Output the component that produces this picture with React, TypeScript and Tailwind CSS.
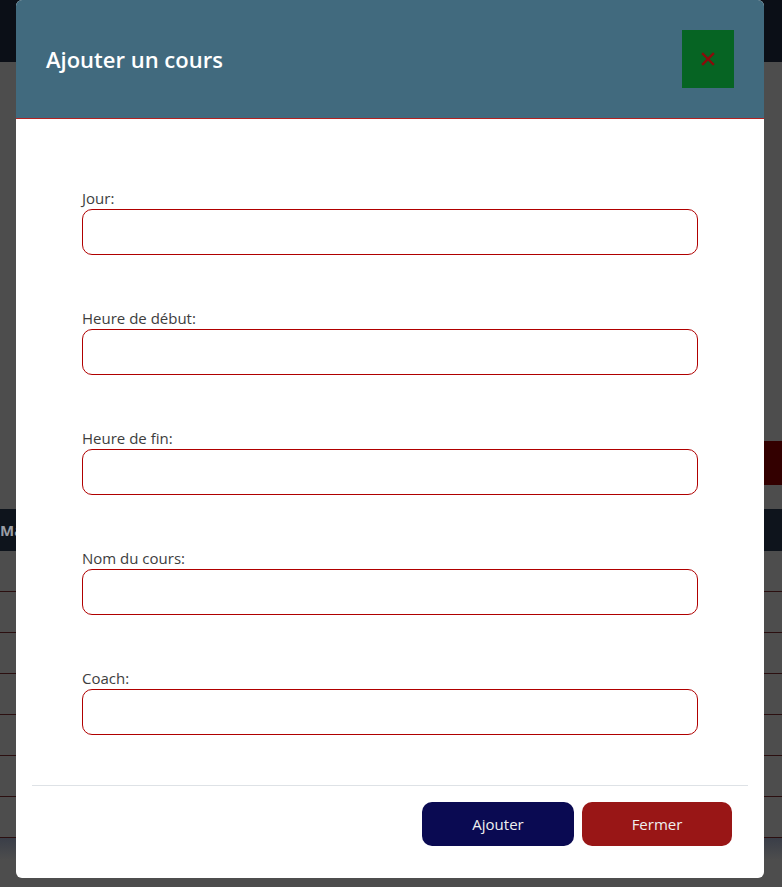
import React from 'react';

const fields = ['Jour:', 'Heure de début:', 'Heure de fin:', 'Nom du cours:', 'Coach:'];

const font = { fontFamily: '"Open Sans", "Liberation Sans", sans-serif' };

export default function App() {
  return (
    <div className="relative h-[887px] w-full overflow-hidden bg-[#4d4d4d]" style={font}>
      {/* page behind the overlay */}
      <div className="h-[62px] bg-[#0b0f17]" />
      <div className="mt-[379px] flex justify-end">
        <div className="h-[44px] w-[220px] bg-[#330000]" />
      </div>
      <div className="mt-[24px] flex h-[42px] items-center bg-[#0e141c]">
        <span className="text-[15px] font-bold text-[#9a9ea5]">Ma</span>
      </div>
      {Array.from({ length: 7 }).map((_, i) => (
        <div key={i} className="h-[41px] border-b border-[#2b0f10]" />
      ))}
      <div className="h-[22px] bg-gradient-to-b from-[#3a3e48] to-[#4d4d4d]" />

      {/* modal */}
      <div className="absolute left-[16px] top-0 flex h-[878px] w-[748px] flex-col overflow-hidden rounded-md bg-white">
        <div className="flex h-[119px] shrink-0 items-center justify-between border-b border-[#b22222] bg-[#416a7e] px-[30px]">
          <h2 className="text-[22px] font-semibold text-white">Ajouter un cours</h2>
          <button className="flex h-[58px] w-[52px] items-center justify-center bg-[#066423]">
            <svg width="14" height="14" viewBox="0 0 14 14">
              <path d="M2 2 L12 12 M12 2 L2 12" stroke="#8b0a0a" strokeWidth="2.4" strokeLinecap="square" />
            </svg>
          </button>
        </div>

        <div className="flex flex-1 flex-col px-[16px]">
          <form className="flex flex-col gap-[53px] px-[50px] pt-[69px]">
            {fields.map((f) => (
              <div key={f} className="flex flex-col">
                <label className="h-[21px] text-[15px] leading-[21px] text-[#3d3d3d]">{f}</label>
                <input className="h-[46px] rounded-[10px] border border-[#b00000] px-3 outline-none" />
              </div>
            ))}
          </form>

          <div className="mt-[50px] flex justify-end gap-[8px] border-t border-[#dee2e6] px-[16px] pt-[16px]">
            <button className="h-[44px] w-[152px] rounded-[10px] bg-[#0a0a52] text-[15px] font-medium text-[#f0f0f0]">
              Ajouter
            </button>
            <button className="h-[44px] w-[150px] rounded-[10px] bg-[#991616] text-[15px] font-medium text-[#f0f0f0]">
              Fermer
            </button>
          </div>
        </div>
      </div>
    </div>
  );
}
